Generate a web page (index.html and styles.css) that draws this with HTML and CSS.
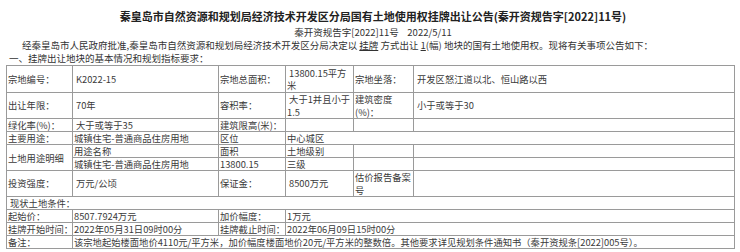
FILE: index.html
```html
<!DOCTYPE html>
<html lang="zh">
<head>
<meta charset="utf-8">
<link rel="stylesheet" href="styles.css">
</head>
<body>
<div class="page">
  <h1 class="title">秦皇岛市自然资源和规划局经济技术开发区分局国有土地使用权挂牌出让公告(秦开资规告字[2022]11号)</h1>
  <div class="sub">秦开资规告字[2022]11号&nbsp;&nbsp;&nbsp;&nbsp;2022/5/11</div>
  <p class="intro">经秦皇岛市人民政府批准,秦皇岛市自然资源和规划局经济技术开发区分局决定以 <u>挂牌</u> 方式出让 <u>1</u>(幅) 地块的国有土地使用权。现将有关事项公告如下：</p>
  <div class="sec">一、挂牌出让地块的基本情况和规划指标要求：</div>
  <table class="grid">
    <colgroup>
      <col class="c1"><col class="c2"><col class="c3"><col class="c4"><col class="c5"><col class="c6">
    </colgroup>
    <tr class="tall r1">
      <td>宗地编号：</td><td class="ind">K2022-15</td><td>宗地总面积：</td><td>&nbsp;13800.15平方<br>米</td><td>宗地坐落：</td><td class="ind">开发区怒江道以北、恒山路以西</td>
    </tr>
    <tr class="tall r2">
      <td>出让年限：</td><td class="ind">70年</td><td>容积率：</td><td>&nbsp;大于1并且小于<br>1.5</td><td>建筑密度<br>(%)：</td><td class="ind">小于或等于30</td>
    </tr>
    <tr>
      <td>绿化率(%)：</td><td class="ind">大于或等于35</td><td>建筑限高(米)：</td><td></td><td></td><td></td>
    </tr>
    <tr>
      <td>主要用途：</td><td>城镇住宅-普通商品住房用地</td><td>区位</td><td colspan="3">中心城区</td>
    </tr>
    <tr>
      <td rowspan="2">土地用途明细</td><td>用途名称</td><td>面积</td><td>土地级别</td><td></td><td></td>
    </tr>
    <tr>
      <td>城镇住宅-普通商品住房用地</td><td>13800.15</td><td>三级</td><td></td><td></td>
    </tr>
    <tr class="tall r7">
      <td>投资强度：</td><td class="ind">万元/公顷</td><td>保证金：</td><td class="ind">8500万元</td><td class="top">估价报告备案<br>号</td><td></td>
    </tr>
    <tr>
      <td colspan="6" class="ind">现状土地条件：</td>
    </tr>
    <tr>
      <td>起始价：</td><td>8507.7924万元</td><td>加价幅度：</td><td colspan="3">1万元</td>
    </tr>
    <tr>
      <td>挂牌开始时间：</td><td>2022年05月31日09时00分</td><td>挂牌截止时间：</td><td colspan="3">2022年06月09日15时00分</td>
    </tr>
    <tr>
      <td>备注：</td><td colspan="5">该宗地起始楼面地价4110元/平方米，加价幅度楼面地价20元/平方米的整数倍。其他要求详见规划条件通知书（秦开资规条[2022]005号）。</td>
    </tr>
  </table>
</div>
</body>
</html>
```

FILE: styles.css
```css
html, body {
  margin: 0;
  padding: 0;
  background: #ffffff;
}
body {
  font-family: "Noto Sans CJK SC", "Noto Sans", sans-serif;
  color: #333333;
  font-size: 9.3px;
}
.page {
  width: 740px;
  padding: 0 0 0 6px;
  box-sizing: border-box;
}
.title {
  margin: 0;
  padding-top: 9px;
  font-size: 11px;
  line-height: 14px;
  font-weight: bold;
  color: #222222;
  text-align: center;
}
.sub {
  margin-top: 3px;
  line-height: 13px;
  text-align: center;
  font-size: 9.5px;
  color: #333333;
}
.intro {
  margin: 0;
  padding-left: 16px;
  line-height: 13px;
  font-size: 9.5px;
  white-space: nowrap;
}
.intro u {
  text-underline-offset: 1px;
}
.sec {
  padding-left: 3px;
  line-height: 13px;
  font-size: 9.5px;
  white-space: nowrap;
}
.grid {
  width: 728px;
  table-layout: fixed;
  border-collapse: collapse;
  border: 1px solid #777777;
}
.grid td {
  border: 1px solid #9a9a9a;
  padding: 0 0 0 1px;
  line-height: 12px;
  height: 12px;
  vertical-align: middle;
  white-space: nowrap;
  overflow: hidden;
  color: #3a3a3a;
}
.grid tr.tall td {
  line-height: 12.5px;
}
.grid tr.r1 td {
  height: 26px;
}
.grid tr.r2 td {
  height: 25px;
}
.grid tr.r7 td {
  height: 24px;
}
.grid td.ind {
  padding-left: 3px;
}
.grid td.top {
  vertical-align: top;
  padding-top: 0;
}
.c1 { width: 66px; }
.c2 { width: 146px; }
.c3 { width: 67px; }
.c4 { width: 68px; }
.c5 { width: 60px; }
.c6 { width: 321px; }
```
